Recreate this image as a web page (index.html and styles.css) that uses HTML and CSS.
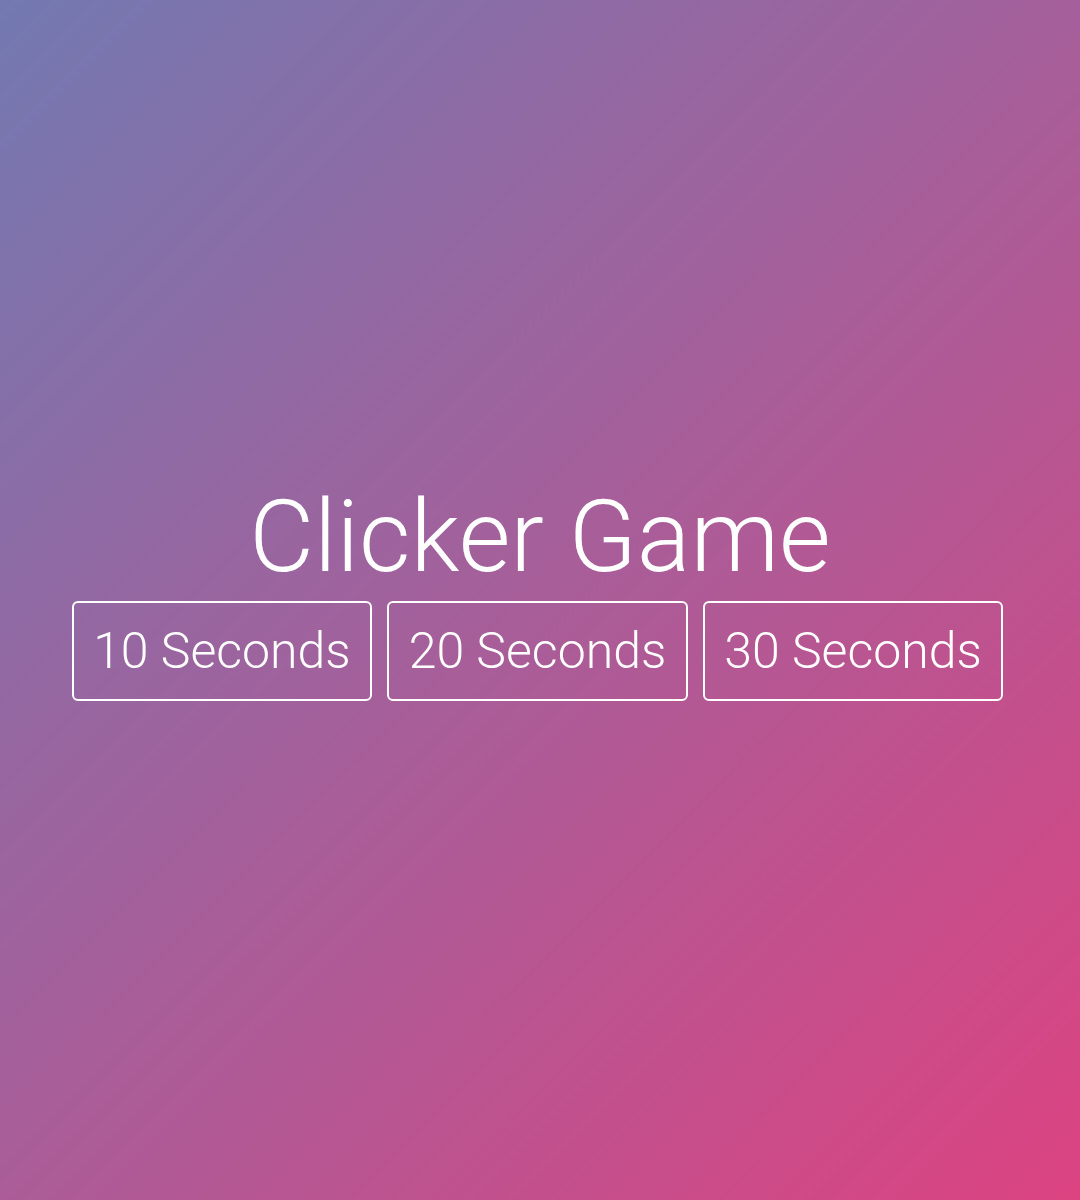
FILE: index.html
```html
<!DOCTYPE html>
<html>
<head>
<meta charset="utf-8">
<link rel="stylesheet" href="styles.css">
</head>
<body>
<main class="page">
  <h1 class="title">Clicker Game</h1>
  <div class="options">
    <button class="opt">10 Seconds</button>
    <button class="opt">20 Seconds</button>
    <button class="opt">30 Seconds</button>
  </div>
</main>
</body>
</html>
```
FILE: styles.css
```css
html, body {
  margin: 0;
  padding: 0;
  height: 100%;
}
body {
  background: linear-gradient(135deg, #7379b1 0%, #dc4381 100%);
  font-family: Roboto, "Liberation Sans", sans-serif;
  color: #fff;
}
.page {
  height: 100%;
  box-sizing: border-box;
  padding-bottom: 22px;
  display: flex;
  flex-direction: column;
  align-items: center;
  justify-content: center;
}
.title {
  margin: 0 0 4px;
  font-size: 100px;
  font-weight: 300;
  line-height: 1.2;
}
.options {
  display: flex;
  gap: 15px;
  padding-right: 5px;
}
.opt {
  font-family: Roboto, "Liberation Sans", sans-serif;
  font-weight: 300;
  font-size: 50px;
  color: #fff;
  background: transparent;
  border: 2px solid #fff;
  border-radius: 6px;
  padding: 20px 19.5px;
  line-height: 56px;
  cursor: pointer;
}
```
